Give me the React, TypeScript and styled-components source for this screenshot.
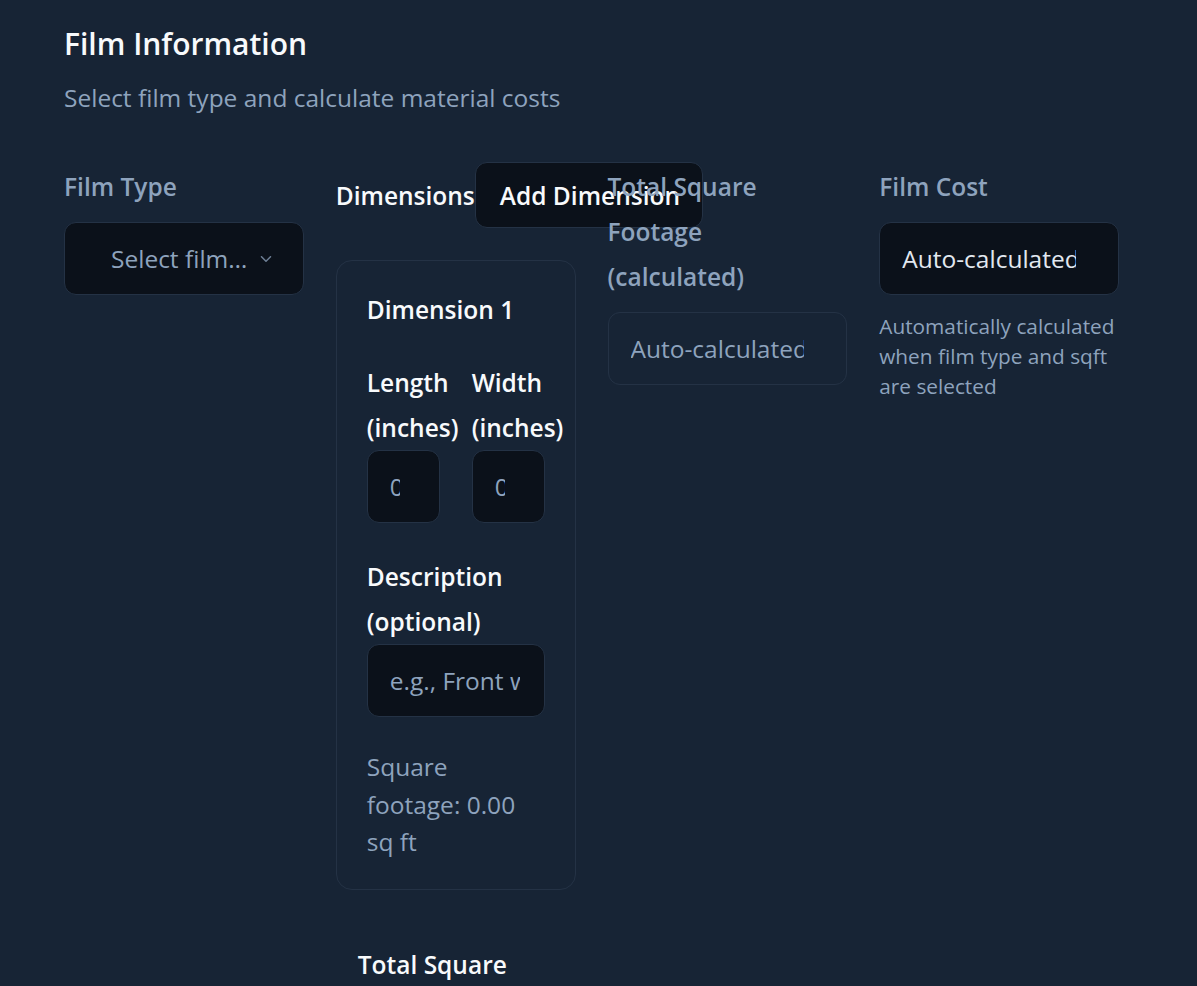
import { memo } from 'react';
import styled, { createGlobalStyle } from 'styled-components';
import { ChevronDown } from 'lucide-react';

const colors = {
  page: '#172435',
  field: '#0b111a',
  border: '#243245',
  white: '#f8fafc',
  muted: '#8ea3bd',
};

const GlobalStyle = createGlobalStyle`
  html, body {
    margin: 0;
    background: ${colors.page};
  }
  body {
    font-family: 'Open Sans', 'Noto Sans', sans-serif;
    color: ${colors.white};
  }
`;

const SPage = styled.div`
  padding: 21px 64px 0;
  width: 1055px;
`;

const STitle = styled.h2`
  margin: 0;
  font-size: 30px;
  line-height: 46px;
  font-weight: 600;
`;

const SSubtitle = styled.p`
  margin: 13px 0 0;
  font-size: 24.5px;
  line-height: 36px;
  color: ${colors.muted};
`;

const SGrid = styled.div`
  display: grid;
  grid-template-columns: repeat(4, minmax(0, 1fr));
  column-gap: 32px;
  align-items: start;
  margin-top: 48px;
`;

const SField = styled.div`
  display: flex;
  flex-direction: column;
  min-width: 0;
`;

const SLabel = styled.label<{ $light?: boolean }>`
  font-size: 24.5px;
  line-height: 45px;
  font-weight: 600;
  color: ${({ $light }) => ($light ? colors.white : colors.muted)};
`;

const SControlLabel = styled(SLabel)`
  margin-bottom: 13px;
`;

const SSelect = styled.button`
  display: flex;
  align-items: center;
  justify-content: space-between;
  height: 73px;
  padding: 0 28px 0 46px;
  background: ${colors.field};
  border: 1px solid ${colors.border};
  border-radius: 12px;
  color: ${colors.muted};
  font-family: inherit;
  font-size: 24.5px;
  text-align: left;

  span {
    white-space: nowrap;
    overflow: hidden;
    text-overflow: ellipsis;
  }

  svg {
    flex-shrink: 0;
    margin-left: 6px;
    opacity: 0.75;
  }
`;

const SInput = styled.input<{ $ghost?: boolean; $bright?: boolean; $padRight?: number }>`
  box-sizing: border-box;
  width: 100%;
  height: 73px;
  padding: 0 ${({ $padRight = 24 }) => $padRight}px 0 22px;
  background: ${({ $ghost }) => ($ghost ? 'transparent' : colors.field)};
  border: 1px solid ${colors.border};
  border-radius: 12px;
  color: ${colors.muted};
  font-family: inherit;
  font-size: 24.5px;
  outline: none;

  &::placeholder {
    color: ${({ $bright }) => ($bright ? '#e2e8f0' : colors.muted)};
  }
`;

const SHelp = styled.p`
  margin: 16px 0 0;
  font-size: 20.8px;
  line-height: 30px;
  color: ${colors.muted};
`;

const SDimHeader = styled.div`
  display: flex;
  align-items: center;
  justify-content: space-between;
  height: 66px;
  margin-top: -2px;
`;

const SAddButton = styled.button`
  flex-shrink: 0;
  height: 66px;
  padding: 0 22px 0 24px;
  background: ${colors.field};
  border: 1px solid ${colors.border};
  border-radius: 12px;
  color: ${colors.white};
  font-family: inherit;
  font-size: 24.5px;
  font-weight: 600;
  white-space: nowrap;
`;

const SCard = styled.div`
  display: flex;
  flex-direction: column;
  gap: 31px;
  margin-top: 32px;
  padding: 30px 30px 28px;
  border: 1px solid ${colors.border};
  border-radius: 16px;
`;

const SCardTitle = styled.div`
  font-size: 24.5px;
  line-height: 38px;
  font-weight: 600;
`;

const SPair = styled.div`
  display: grid;
  grid-template-columns: repeat(2, minmax(0, 1fr));
  column-gap: 32px;
`;

const SInlineField = styled.div`
  display: flex;
  flex-direction: column;
  min-width: 0;

  label {
    white-space: nowrap;
  }
`;

const SSqft = styled.div`
  font-size: 24.5px;
  line-height: 37.5px;
  color: ${colors.muted};
`;

const STotal = styled.div`
  margin-top: 32px;
  padding: 20px 22px;
  font-size: 24.5px;
  line-height: 45px;
  font-weight: 600;
`;

const App = () => (
  <>
    <GlobalStyle />
    <SPage>
      <STitle>Film Information</STitle>
      <SSubtitle>Select film type and calculate material costs</SSubtitle>

      <SGrid>
        <SField>
          <SControlLabel>Film Type</SControlLabel>
          <SSelect type='button'>
            <span>Select film type</span>
            <ChevronDown size={18} />
          </SSelect>
        </SField>

        <SField>
          <SDimHeader>
            <SLabel $light>Dimensions</SLabel>
            <SAddButton type='button'>Add Dimension</SAddButton>
          </SDimHeader>
          <SCard>
            <SCardTitle>Dimension 1</SCardTitle>
            <SPair>
              <SInlineField>
                <SLabel $light>
                  Length
                  <br />
                  (inches)
                </SLabel>
                <SInput type='number' defaultValue={0} />
              </SInlineField>
              <SInlineField>
                <SLabel $light>
                  Width
                  <br />
                  (inches)
                </SLabel>
                <SInput type='number' defaultValue={0} />
              </SInlineField>
            </SPair>
            <SInlineField>
              <SLabel $light>
                Description
                <br />
                (optional)
              </SLabel>
              <SInput placeholder='e.g., Front window' />
            </SInlineField>
            <SSqft>
              Square
              <br />
              footage: 0.00
              <br />
              sq ft
            </SSqft>
          </SCard>
          <STotal>Total Square Footage: 0.00 sq ft</STotal>
        </SField>

        <SField>
          <SControlLabel>
            Total Square
            <br />
            Footage
            <br />
            (calculated)
          </SControlLabel>
          <SInput $ghost readOnly placeholder='Auto-calculated' $padRight={42} />
        </SField>

        <SField>
          <SControlLabel>Film Cost</SControlLabel>
          <SInput $bright readOnly placeholder='Auto-calculated' $padRight={42} />
          <SHelp>Automatically calculated when film type and sqft are selected</SHelp>
        </SField>
      </SGrid>
    </SPage>
  </>
);

export default memo(App);
